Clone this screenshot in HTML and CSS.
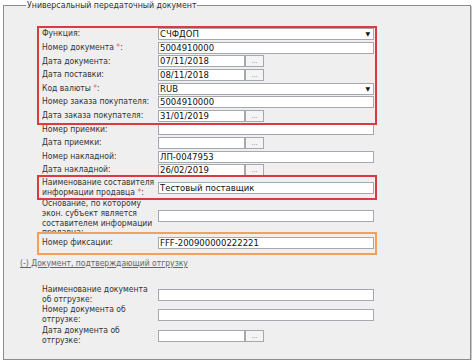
FILE: index.html
```html
<!DOCTYPE html>
<html lang="ru">
<head>
    <meta charset="UTF-8">
    <title>Универсальный передаточный документ</title>
    <link rel="stylesheet" href="styles.css">
</head>
<body>
    <fieldset class="doc">
        <legend>Универсальный передаточный документ</legend>

        <div class="group group-red">
            <div class="row">
                <label>Функция:</label>
                <div class="select">СЧФДОП<span class="arrow">&#9660;</span></div>
            </div>
            <div class="row">
                <label>Номер документа <span class="req">*</span>:</label>
                <input class="field" type="text" value="5004910000">
            </div>
            <div class="row">
                <label>Дата документа:</label>
                <input class="field date" type="text" value="07/11/2018"><button class="pick">...</button>
            </div>
            <div class="row">
                <label>Дата поставки:</label>
                <input class="field date" type="text" value="08/11/2018"><button class="pick">...</button>
            </div>
            <div class="row">
                <label>Код валюты <span class="req">*</span>:</label>
                <div class="select">RUB<span class="arrow">&#9660;</span></div>
            </div>
            <div class="row">
                <label>Номер заказа покупателя:</label>
                <input class="field" type="text" value="5004910000">
            </div>
            <div class="row">
                <label>Дата заказа покупателя:</label>
                <input class="field date" type="text" value="31/01/2019"><button class="pick">...</button>
            </div>
        </div>

        <div class="group">
            <div class="row">
                <label>Номер приемки:</label>
                <input class="field" type="text" value="">
            </div>
            <div class="row">
                <label>Дата приемки:</label>
                <input class="field date" type="text" value=""><button class="pick">...</button>
            </div>
            <div class="row">
                <label>Номер накладной:</label>
                <input class="field" type="text" value="ЛП-0047953">
            </div>
            <div class="row">
                <label>Дата накладной:</label>
                <input class="field date" type="text" value="26/02/2019"><button class="pick">...</button>
            </div>
        </div>

        <div class="group group-red">
            <div class="row row-tall">
                <label>Наименование составителя<br>информации продавца <span class="req">*</span>:</label>
                <input class="field" type="text" value="Тестовый поставщик">
            </div>
        </div>

        <div class="group">
            <div class="row row-clip">
                <label>Основание, по которому<br>экон. субъект является<br>составителем информации<br>продавца:</label>
                <input class="field" type="text" value="">
            </div>
        </div>

        <div class="group group-orange">
            <div class="row">
                <label>Номер фиксации:</label>
                <input class="field" type="text" value="FFF-200900000222221">
            </div>
        </div>

        <a class="toggle" href="#">(-) Документ, подтверждающий отгрузку</a>

        <div class="group group-ship">
            <div class="row row-tall">
                <label>Наименование документа<br>об отгрузке:</label>
                <input class="field" type="text" value="">
            </div>
            <div class="row row-tall">
                <label>Номер документа об<br>отгрузке:</label>
                <input class="field" type="text" value="">
            </div>
            <div class="row row-tall">
                <label>Дата документа об<br>отгрузке:</label>
                <input class="field date" type="text" value=""><button class="pick">...</button>
            </div>
        </div>
    </fieldset>
</body>
</html>
```

FILE: styles.css
```css
body {
    margin: 0;
    background-color: #fff;
    color: #222;
    font-family: "DejaVu Sans Condensed", "DejaVu Sans", Verdana, sans-serif;
    font-size: 8.5px;
}

.doc {
    margin: 0 3px;
    height: 341px;
    padding: 16.5px 16px 0 16px;
    border: 1px solid #8c8c8c;
    box-shadow: 1px 1px 0 #c8c8c8;
    background-color: #efefef;
    box-sizing: content-box;
}
.doc legend {
    margin-left: 6px;
    padding: 0 1px;
    font-size: 8.7px;
    line-height: 11px;
    color: #333;
}

.group {
    margin-left: 19px;
    width: 336px;
}
.group-red {
    outline: 2px solid #dc3a42;
}
.group-orange {
    outline: 2px solid #f3a05a;
    padding: 2.5px 0;
    position: relative;
}
.group-ship {
    margin-top: 17px;
}

.row {
    display: flex;
    align-items: center;
    height: 13.6px;
}
.row label {
    flex: none;
    width: 116px;
    padding: 0 0 0 3px;
    line-height: 9.8px;
    white-space: nowrap;
    color: #333;
}
.row-tall {
    height: 20.4px;
}
.group-red .row-tall {
    height: 21px;
}
.row-clip {
    height: 36px;
    overflow: hidden;
}
.row-clip label {
    align-self: flex-start;
    padding-top: 1px;
}

.req {
    color: #ee5c64;
}

.field,
.select {
    box-sizing: border-box;
    width: 216px;
    height: 12px;
    margin: 0;
    padding: 0 1px;
    border: 1px solid #a6a8b0;
    background-color: #fff;
    font-family: "DejaVu Sans", Verdana, sans-serif;
    font-size: 8.5px;
    line-height: 10px;
    color: #111;
}
.field.date {
    width: 87px;
}
.select {
    display: flex;
    justify-content: space-between;
    align-items: center;
    padding-right: 3px;
}
.arrow {
    font-size: 6px;
    color: #111;
}

.pick {
    box-sizing: border-box;
    width: 19px;
    height: 12px;
    margin: 0;
    padding: 0;
    border: 1px solid #a6a8b0;
    background-color: #f4f4f4;
    font-family: "DejaVu Sans", Verdana, sans-serif;
    font-size: 7px;
    line-height: 8px;
    color: #888;
}

.toggle {
    display: block;
    margin: 5px 0 0 0;
    line-height: 10px;
    color: #666;
}
```
